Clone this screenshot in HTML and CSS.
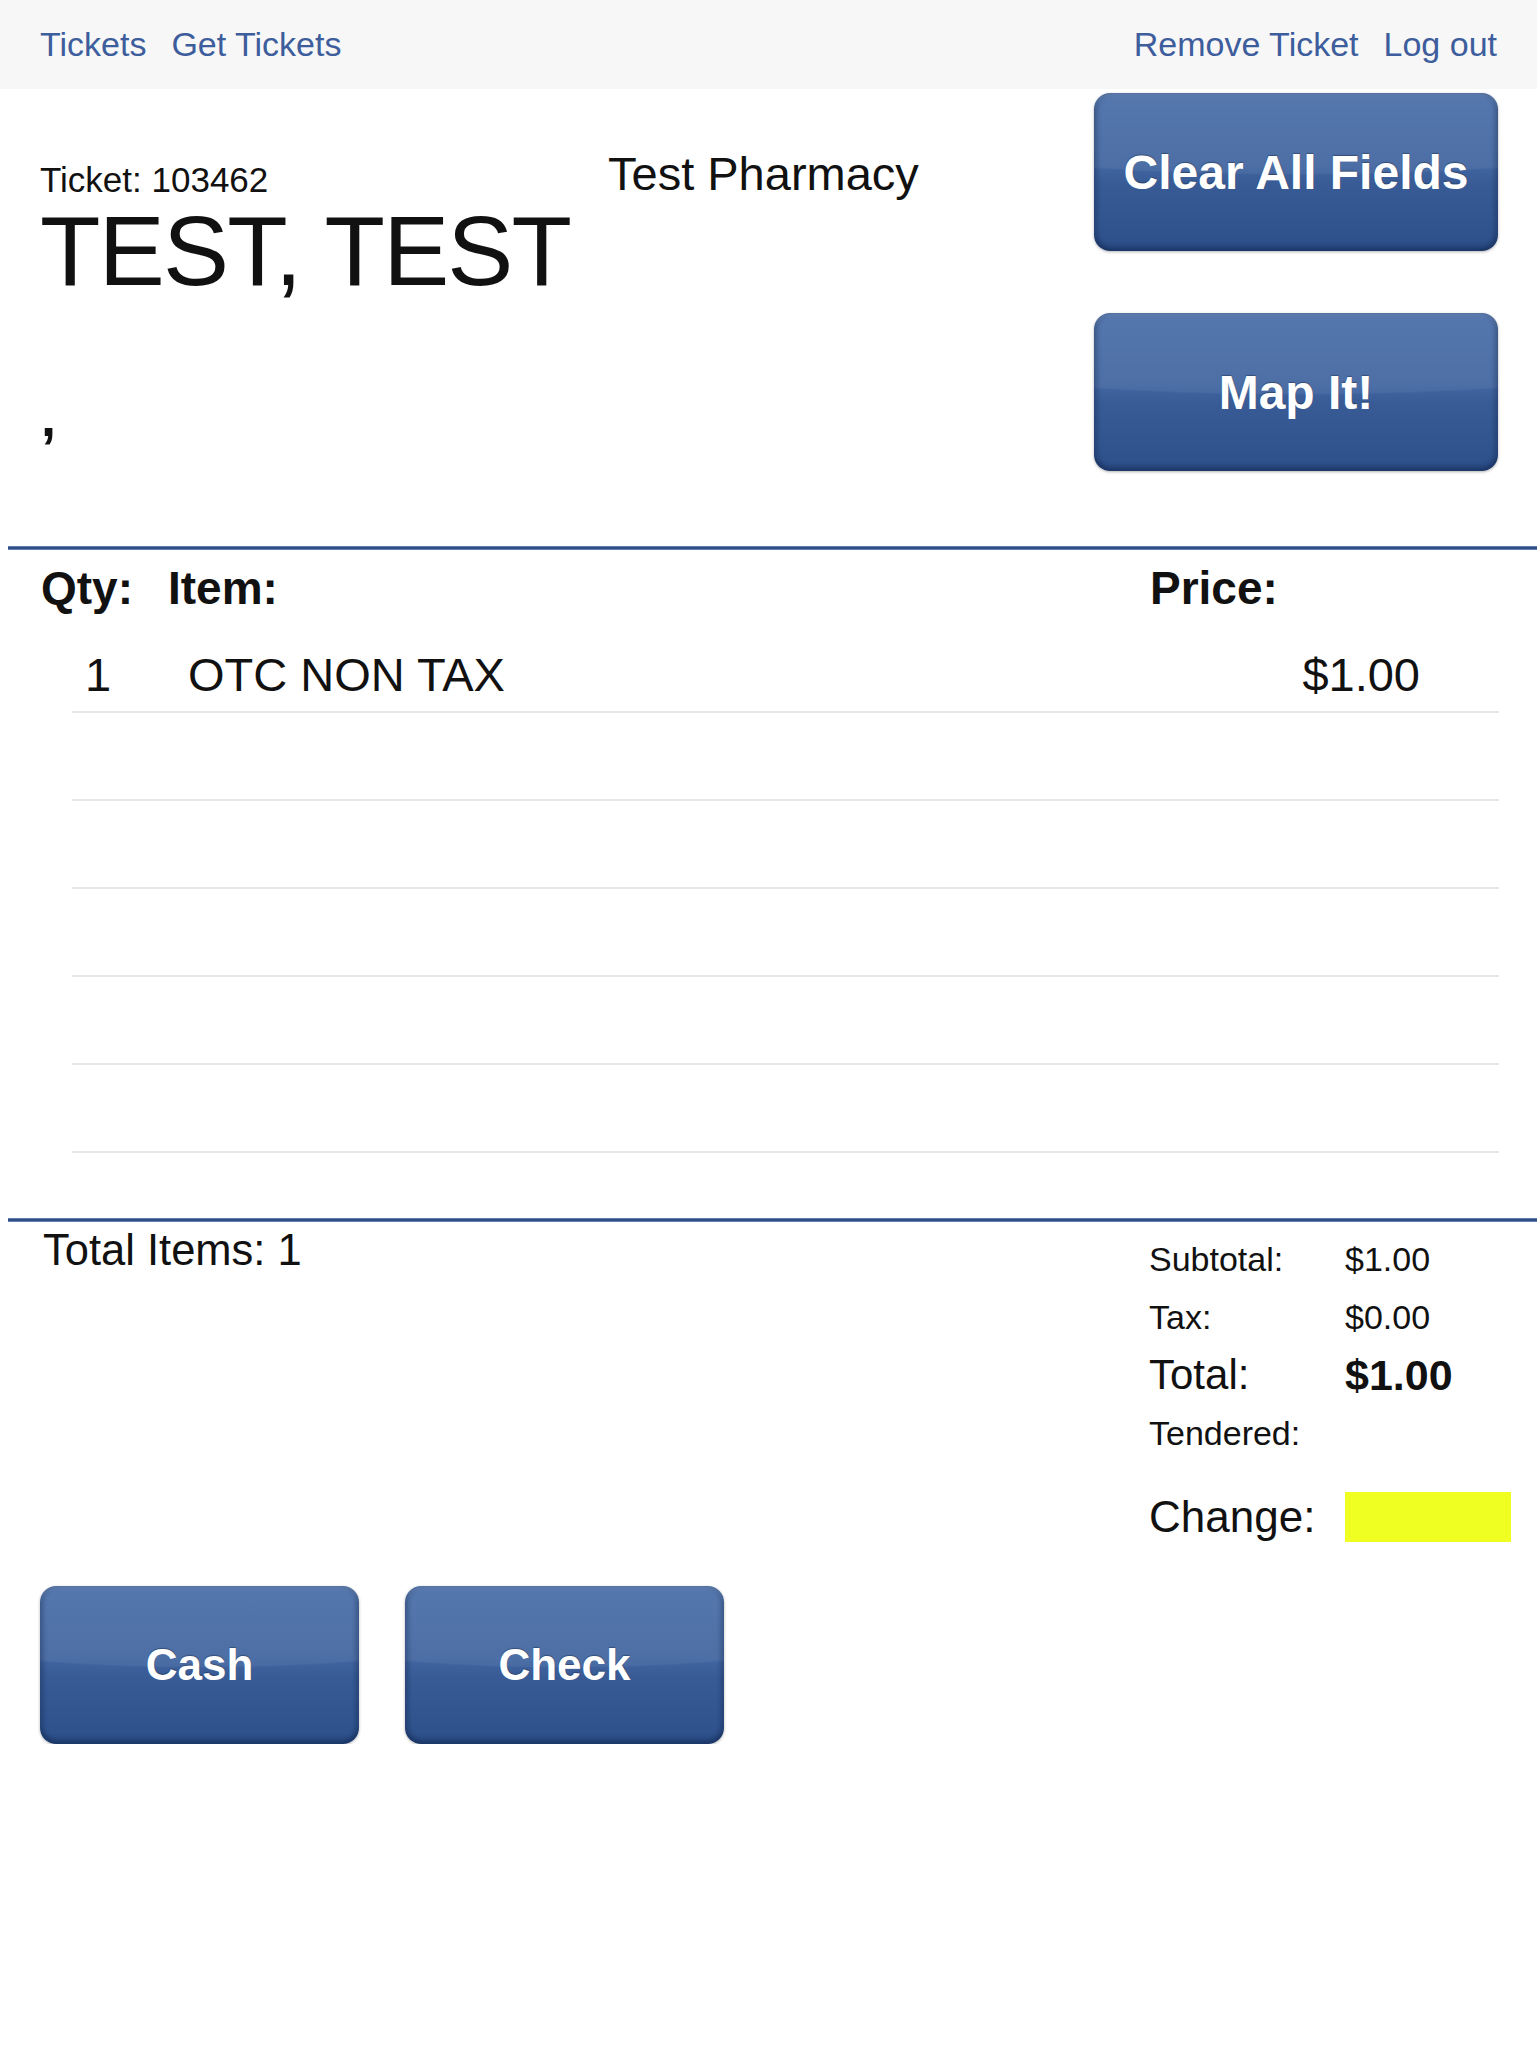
FILE: index.html
```html
<!DOCTYPE html>
<html>
<head>
<meta charset="utf-8">
<title>Ticket 103462</title>
<link rel="stylesheet" href="styles.css">
</head>
<body>
<nav class="nav">
  <div class="nav-group">
    <a class="nav-link" href="#">Tickets</a>
    <a class="nav-link" href="#">Get Tickets</a>
  </div>
  <div class="nav-group">
    <a class="nav-link" href="#">Remove Ticket</a>
    <a class="nav-link" href="#">Log out</a>
  </div>
</nav>

<header class="header">
  <div class="customer">
    <div class="ticket-no">Ticket: 103462</div>
    <div class="patient-name">TEST, TEST</div>
    <div class="address">,</div>
  </div>
  <div class="store">Test Pharmacy</div>
  <div class="actions">
    <button class="btn btn-large">Clear All Fields</button>
    <button class="btn btn-large">Map It!</button>
  </div>
</header>

<div class="rule"></div>

<section class="items">
  <div class="items-head">
    <span class="col-qty">Qty:</span>
    <span class="col-item">Item:</span>
    <span class="col-price">Price:</span>
  </div>
  <div class="rows">
    <div class="row">
      <span class="cell-qty">1</span>
      <span class="cell-item">OTC NON TAX</span>
      <span class="cell-price">$1.00</span>
    </div>
    <div class="row"></div>
    <div class="row"></div>
    <div class="row"></div>
    <div class="row"></div>
    <div class="row"></div>
  </div>
</section>

<div class="rule rule-bottom"></div>

<section class="summary">
  <div class="total-items">Total Items: 1</div>
  <div class="totals">
    <div class="t-row"><span class="t-label">Subtotal:</span><span class="t-value">$1.00</span></div>
    <div class="t-row"><span class="t-label">Tax:</span><span class="t-value">$0.00</span></div>
    <div class="t-row t-total"><span class="t-label">Total:</span><span class="t-value">$1.00</span></div>
    <div class="t-row"><span class="t-label">Tendered:</span><span class="t-value"></span></div>
    <div class="t-row t-change"><span class="t-label">Change:</span><span class="change-box"></span></div>
  </div>
</section>

<section class="payments">
  <button class="btn btn-small">Cash</button>
  <button class="btn btn-small">Check</button>
</section>
</body>
</html>
```

FILE: styles.css
```css
* { box-sizing: border-box; }

html, body {
  margin: 0;
  padding: 0;
  background: #ffffff;
}

body {
  font-family: "Liberation Sans", Arial, Helvetica, sans-serif;
  color: #111111;
  width: 1537px;
}

/* ---------- nav ---------- */
.nav {
  height: 89px;
  background: #f7f7f7;
  display: flex;
  justify-content: space-between;
  align-items: center;
  padding: 0 40px 0 40px;
}

.nav-group {
  display: flex;
  gap: 25px;
}

.nav-link {
  font-size: 34px;
  line-height: 34px;
  color: #3d5d9c;
  text-decoration: none;
  margin-top: -2px;
}

/* ---------- header ---------- */
.header {
  height: 457px;
  display: grid;
  grid-template-columns: 568px 1fr 404px;
  padding: 4px 39px 0 40px;
}

.customer {
  display: flex;
  flex-direction: column;
}

.ticket-no {
  font-size: 35px;
  line-height: 35px;
  margin-top: 69px;
}

.patient-name {
  font-size: 99px;
  line-height: 98px;
  letter-spacing: -1.8px;
  margin-top: 5px;
  white-space: nowrap;
}

.address {
  font-size: 54px;
  line-height: 54px;
  margin-top: 90px;
  padding-left: 1px;
  font-weight: bold;
}

.store {
  font-size: 47px;
  line-height: 47px;
  margin-top: 57px;
}

.actions {
  display: flex;
  flex-direction: column;
  gap: 62px;
}

/* ---------- buttons ---------- */
.btn {
  border: none;
  border-radius: 16px;
  color: #ffffff;
  font-family: "Liberation Sans", Arial, Helvetica, sans-serif;
  font-weight: bold;
  text-shadow: 0 -1px 1px rgba(0, 0, 0, 0.3);
  background:
    radial-gradient(ellipse 140% 60% at 50% -8%, rgba(255, 255, 255, 0.06) 0 98%, rgba(255, 255, 255, 0) 100%),
    linear-gradient(to bottom, #4a6fa9 0%, #4266a1 45%, #385b96 58%, #2d508b 100%);
  box-shadow:
    inset 0 -5px 5px rgba(10, 25, 60, 0.35),
    inset 4px 0 4px rgba(10, 25, 60, 0.18),
    inset -4px 0 4px rgba(10, 25, 60, 0.18),
    inset 0 3px 3px rgba(255, 255, 255, 0.1),
    0 1px 3px rgba(0, 0, 0, 0.3);
  padding: 0;
  cursor: pointer;
}

.btn-large {
  width: 404px;
  height: 158px;
  font-size: 48px;
}

.btn-small {
  width: 319px;
  height: 158px;
  font-size: 44px;
}

/* ---------- rules ---------- */
.rule {
  height: 4px;
  margin-left: 8px;
  background: linear-gradient(to bottom, #7d93bb 0%, #2f4f89 35%, #2f4f89 70%, #8ea2c4 100%);
}

.rule-bottom {
  margin-top: 65px;
}

/* ---------- items ---------- */
.items-head {
  height: 75px;
  display: flex;
  align-items: center;
  padding-left: 41px;
  font-size: 46px;
  font-weight: bold;
}

.col-qty { width: 127px; }
.col-item { width: 982px; }

.rows {
  margin: 0 38px 0 72px;
}

.row {
  height: 88px;
  border-bottom: 2px solid #e6e6e6;
  display: flex;
  align-items: center;
  padding: 12px 0 0 13px;
  font-size: 47px;
}

.cell-qty { width: 103px; }
.cell-item { flex: 1; }
.cell-price { margin-right: 79px; }

/* ---------- summary ---------- */
.summary {
  display: flex;
  justify-content: space-between;
}

.total-items {
  font-size: 43.5px;
  line-height: 43px;
  padding: 7px 0 0 43px;
}

.totals {
  width: 388px;
  padding: 8px 26px 0 0;
  display: flex;
  flex-direction: column;
}

.t-row {
  height: 58px;
  display: flex;
  align-items: center;
  font-size: 34px;
}

.t-label { width: 196px; }

.t-total { font-size: 42px; }
.t-total .t-value { font-weight: bold; font-size: 43px; }

.t-change {
  height: 50px;
  margin-top: 30px;
  font-size: 44px;
}

.change-box {
  width: 166px;
  height: 50px;
  background: #f0ff22;
}

/* ---------- payments ---------- */
.payments {
  display: flex;
  gap: 46px;
  padding-left: 40px;
  margin-top: 44px;
}
```
